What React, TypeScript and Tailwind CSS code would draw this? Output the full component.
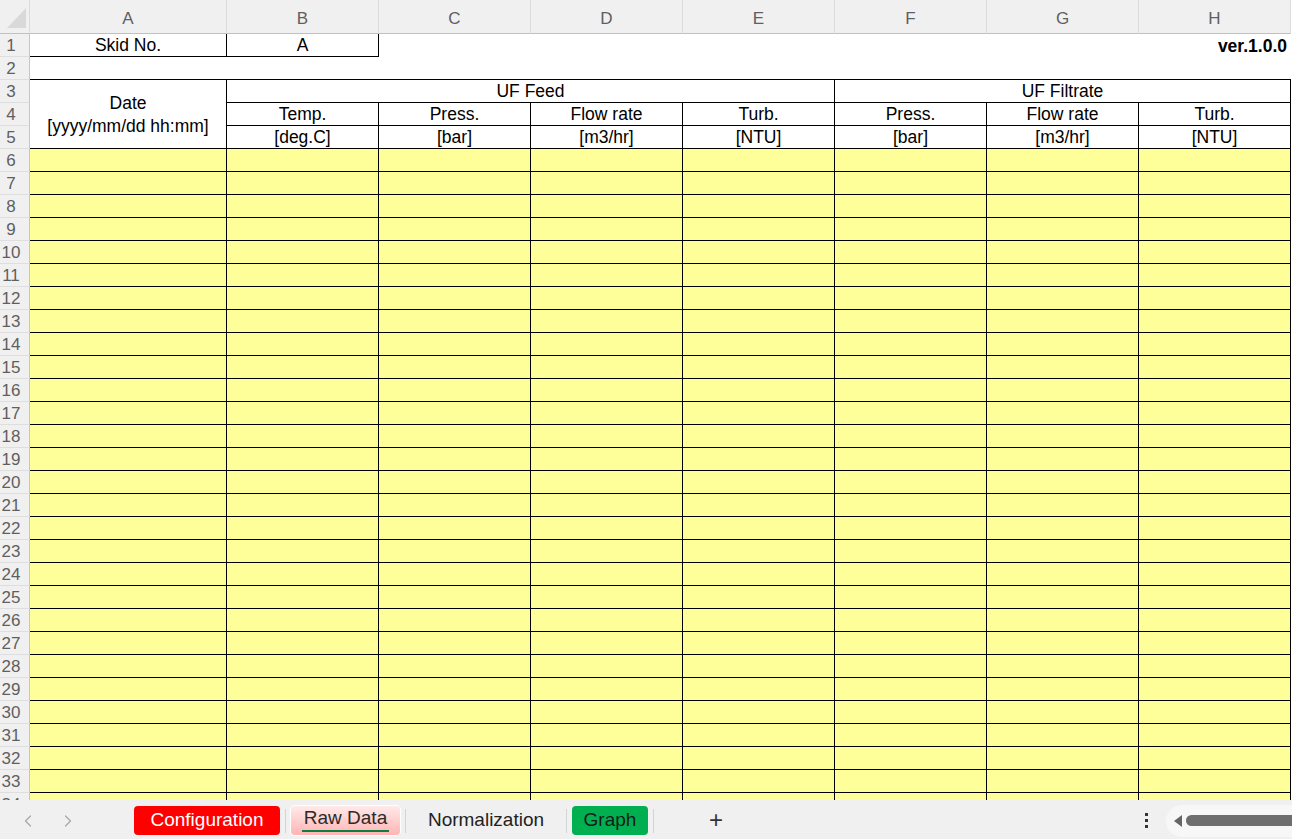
import { ChevronLeft, ChevronRight } from "lucide-react";

const COLS = ["A", "B", "C", "D", "E", "F", "G", "H"];
const DATA_ROWS = Array.from({ length: 29 }, (_, i) => i + 6);

const colHead =
  "bg-[#f0f0f0] border-r border-r-[#dcdcdc] border-b border-b-[#c0c0c0] flex items-center justify-center pt-[4px] text-[17px] text-[#5f5f5f]";
const rowHead =
  "bg-[#f0f0f0] border-r border-r-[#c6c6c6] border-b border-b-[#dedede] flex items-center justify-center pr-[7px] pt-px text-[17px] text-[#5f5f5f]";
const boxed = "border-r border-b border-black flex items-center justify-center pt-px";

function RowHead({ n }: { n: number }) {
  return <div className={rowHead}>{n}</div>;
}

function Sheet() {
  return (
    <div className="grid grid-cols-[30px_197px_repeat(7,152px)] grid-rows-[34px_repeat(34,23px)] leading-[23px] text-[17.5px] text-black">
      {/* corner + column letters */}
      <div className="bg-[#f0f0f0] border-r border-r-[#dcdcdc] border-b border-b-[#c0c0c0] flex items-end justify-end pr-[3px] pb-[5px]">
        <svg width="19" height="20" viewBox="0 0 19 20">
          <polygon points="19,0 19,20 0,20" fill="#d9d9d9" />
        </svg>
      </div>
      {COLS.map((c) => (
        <div key={c} className={colHead}>
          {c}
        </div>
      ))}

      {/* row 1 */}
      <RowHead n={1} />
      <div className={boxed}>Skid No.</div>
      <div className={boxed}>A</div>
      <div />
      <div />
      <div />
      <div />
      <div />
      <div className="flex items-center justify-end pr-[4px] pt-px font-bold">ver.1.0.0</div>

      {/* row 2 */}
      <RowHead n={2} />
      {COLS.map((c) => (
        <div key={c} className="border-b border-black" />
      ))}

      {/* rows 3-5: table header */}
      <RowHead n={3} />
      <div className={`${boxed} row-span-3 flex-col`}>
        <span>Date</span>
        <span>[yyyy/mm/dd hh:mm]</span>
      </div>
      <div className={`${boxed} col-span-4`}>UF Feed</div>
      <div className={`${boxed} col-span-3`}>UF Filtrate</div>

      <RowHead n={4} />
      {["Temp.", "Press.", "Flow rate", "Turb.", "Press.", "Flow rate", "Turb."].map((t, i) => (
        <div key={i} className={boxed}>
          {t}
        </div>
      ))}

      <RowHead n={5} />
      {["[deg.C]", "[bar]", "[m3/hr]", "[NTU]", "[bar]", "[m3/hr]", "[NTU]"].map((t, i) => (
        <div key={i} className={boxed}>
          {t}
        </div>
      ))}

      {/* input rows */}
      {DATA_ROWS.map((r) => [
        <RowHead key={`h${r}`} n={r} />,
        ...COLS.map((c) => <div key={`${c}${r}`} className="bg-[#ffff99] border-r border-b border-black" />),
      ])}
    </div>
  );
}

function Sep() {
  return <div className="w-px h-[24px] bg-[#d4d4d4] mx-[5px]" />;
}

function TabBar() {
  return (
    <div className="h-[39px] bg-[#f0f0f0] flex items-center pt-[2px] text-[19px] text-[#222]">
      <div className="w-[134px] flex items-center text-[#a8a8a8]">
        <ChevronLeft size={20} strokeWidth={1.5} className="ml-[18px]" />
        <ChevronRight size={20} strokeWidth={1.5} className="ml-[20px]" />
      </div>
      <div className="w-[146px] h-[29px] rounded-[4px] bg-[#ff0000] text-white flex items-center justify-center">
        Configuration
      </div>
      <Sep />
      <div className="relative w-[109px] h-[29px] rounded-[4px] bg-gradient-to-b from-[#ffeaea] to-[#ffb4b4] shadow-[0_0_0_1px_#ffffff] flex items-center justify-center pb-[4px] text-[#2a2a2a]">
        Raw Data
        <div className="absolute left-[11px] right-[11px] bottom-[3px] h-[2px] bg-[#107c41]" />
      </div>
      <Sep />
      <div className="w-[150px] h-[29px] flex items-center justify-center">Normalization</div>
      <Sep />
      <div className="w-[76px] h-[29px] rounded-[4px] bg-[#00b050] flex items-center justify-center text-[#1a1a1a]">
        Graph
      </div>
      <Sep />
      <div className="ml-[50px] text-[24px] font-light text-[#333] leading-none pb-[2px]">+</div>
      <div className="flex-1" />
      <div className="flex flex-col gap-[3px] mr-[18px]">
        <span className="w-[3px] h-[3px] bg-[#333]" />
        <span className="w-[3px] h-[3px] bg-[#333]" />
        <span className="w-[3px] h-[3px] bg-[#333]" />
      </div>
      <div className="w-[126px] h-[32px] bg-[#f7f7f7] rounded-l-[16px] flex items-center pl-[8px] gap-[4px]">
        <svg width="8" height="12" viewBox="0 0 8 12">
          <polygon points="8,0 8,12 0,6" fill="#666666" />
        </svg>
        <div className="flex-1 h-[11px] rounded-l-full bg-[#6e6e6e]" />
      </div>
    </div>
  );
}

export default function App() {
  return (
    <div className="w-[1292px] h-[839px] bg-white overflow-hidden flex flex-col font-['Liberation_Sans',Arial,sans-serif]">
      <div className="h-[800px] overflow-hidden">
        <Sheet />
      </div>
      <TabBar />
    </div>
  );
}
